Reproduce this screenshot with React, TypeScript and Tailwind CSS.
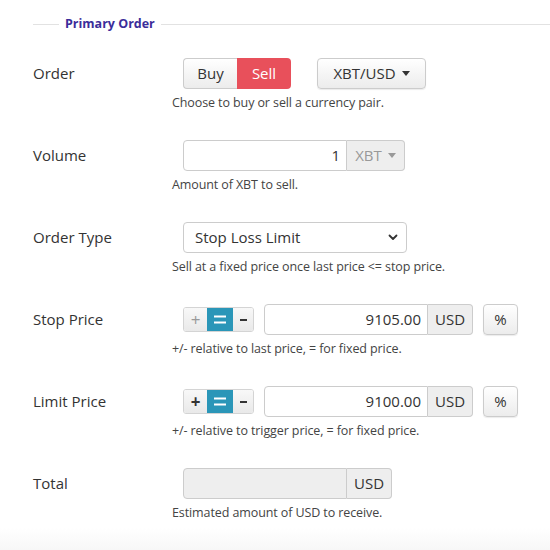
const font = { fontFamily: "'Open Sans', 'Noto Sans', sans-serif" };

function Caret({ className = "" }: { className?: string }) {
  return (
    <svg width="8" height="5" viewBox="0 0 8 5" className={className}>
      <path d="M0 0h8L4 5z" fill="currentColor" />
    </svg>
  );
}

function Row({ label, help, children }: { label: string; help: string; children: React.ReactNode }) {
  return (
    <div className="flex h-[82px]">
      <div className="flex h-[31px] w-[172px] items-center pl-[33px] text-[15px] text-[#333]">{label}</div>
      <div className="flex flex-col">
        <div className="ml-[11px] flex h-[31px] items-center">{children}</div>
        <div className="mt-[6px] text-[12.5px] leading-[16px] tracking-[-0.1px] text-[#444]">{help}</div>
      </div>
    </div>
  );
}

function Adjust({ plusMuted }: { plusMuted?: boolean }) {
  return (
    <div className="mr-[10px] flex h-[25px] overflow-hidden rounded-[3px] border border-[#d4d4d4] leading-none">
      <div
        className={
          "flex w-[23px] items-center justify-center bg-gradient-to-b from-[#f8f8f8] to-[#e9e9e9] text-[17px] " +
          (plusMuted ? "font-normal text-[#999]" : "font-bold text-[#333]")
        }
      >
        +
      </div>
      <div className="flex w-[26px] items-center justify-center bg-[#2a96b8]">
        <svg width="12" height="9" viewBox="0 0 12 9">
          <path d="M0 1.5h12M0 7.5h12" stroke="#fff" strokeWidth="2.2" />
        </svg>
      </div>
      <div className="flex w-[20px] items-center justify-center bg-gradient-to-b from-[#f8f8f8] to-[#e9e9e9]">
        <div className="h-[2px] w-[7px] bg-[#333]" />
      </div>
    </div>
  );
}

function PriceInput({ value }: { value: string }) {
  return (
    <div className="flex h-[31px]">
      <div className="flex w-[164px] items-center justify-end rounded-l-[4px] border border-[#ccc] bg-white pr-[6px] text-[15px] text-[#333]">
        {value}
      </div>
      <div className="flex w-[45px] items-center justify-center rounded-r-[4px] border border-l-0 border-[#ccc] bg-[#eee] text-[15px] text-[#333]">
        USD
      </div>
      <div className="ml-[10px] flex w-[35px] items-center justify-center rounded-[4px] border border-[#ccc] bg-gradient-to-b from-white to-[#ececec] text-[15px] text-[#333] shadow-[0_1px_1px_rgba(0,0,0,0.08)]">
        %
      </div>
    </div>
  );
}

export default function App() {
  return (
    <div className="relative h-[550px] w-[550px] overflow-hidden bg-white" style={font}>
      <div className="flex items-center pt-[16px]">
        <div className="ml-[33px] h-px w-[26px] bg-[#e2e2e2]" />
        <div className="px-[6px] text-[12.5px] font-bold leading-[16px] text-[#3b2d9a]">Primary Order</div>
        <div className="h-px flex-1 bg-[#e2e2e2]" />
      </div>

      <div className="mt-[26px]">
        <Row label="Order" help="Choose to buy or sell a currency pair.">
          <div className="flex h-[31px] text-[15px]">
            <div className="flex w-[54px] items-center justify-center rounded-l-[4px] border border-r-0 border-[#ccc] bg-gradient-to-b from-white to-[#ececec] text-[#333]">
              Buy
            </div>
            <div className="flex w-[54px] items-center justify-center rounded-r-[4px] bg-[#e8505b] text-white">Sell</div>
          </div>
          <div className="ml-[26px] flex h-[31px] w-[109px] items-center justify-center gap-[6px] rounded-[4px] border border-[#ccc] bg-gradient-to-b from-white to-[#ececec] text-[15px] text-[#333] shadow-[0_1px_1px_rgba(0,0,0,0.08)]">
            XBT/USD
            <Caret />
          </div>
        </Row>

        <Row label="Volume" help="Amount of XBT to sell.">
          <div className="flex h-[31px]">
            <div className="flex w-[164px] items-center justify-end rounded-l-[4px] border border-[#ccc] bg-white pr-[6px] text-[15px] text-[#333]">
              1
            </div>
            <div className="flex w-[58px] items-center justify-center gap-[6px] rounded-r-[4px] border border-l-0 border-[#ccc] bg-[#eee] text-[15px] text-[#999]">
              XBT
              <Caret />
            </div>
          </div>
        </Row>

        <Row label="Order Type" help="Sell at a fixed price once last price <= stop price.">
          <div className="flex h-[31px] w-[224px] items-center justify-between rounded-[4px] border border-[#ccc] bg-white pl-[11px] pr-[8px] text-[15px] text-[#333]">
            Stop Loss Limit
            <svg width="10" height="7" viewBox="0 0 10 7">
              <path d="M1.5 1.5 5 5l3.5-3.5" fill="none" stroke="#333" strokeWidth="1.8" strokeLinecap="round" strokeLinejoin="round" />
            </svg>
          </div>
        </Row>

        <Row label="Stop Price" help="+/- relative to last price, = for fixed price.">
          <Adjust plusMuted />
          <PriceInput value="9105.00" />
        </Row>

        <Row label="Limit Price" help="+/- relative to trigger price, = for fixed price.">
          <Adjust />
          <PriceInput value="9100.00" />
        </Row>

        <Row label="Total" help="Estimated amount of USD to receive.">
          <div className="flex h-[31px]">
            <div className="w-[164px] rounded-l-[4px] border border-[#ccc] bg-[#eee]" />
            <div className="flex w-[45px] items-center justify-center rounded-r-[4px] border border-l-0 border-[#ccc] bg-[#eee] text-[15px] text-[#333]">
              USD
            </div>
          </div>
        </Row>
      </div>

      <div className="absolute inset-x-0 bottom-0 h-[22px] bg-gradient-to-b from-white to-[#f7f7f7]" />
    </div>
  );
}
